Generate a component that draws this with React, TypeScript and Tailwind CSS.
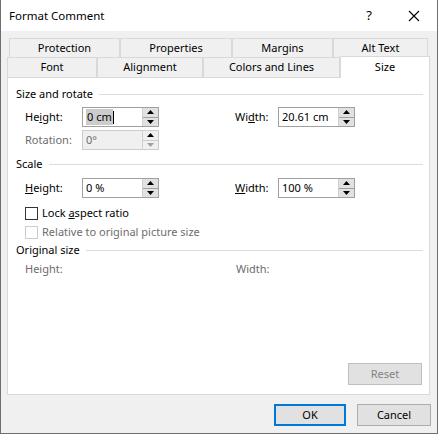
import type { ReactNode } from 'react';

const font = { fontFamily: '"Noto Sans", "Segoe UI", sans-serif' };

function Arrow({ up, dim }: { up?: boolean; dim?: boolean }) {
  return (
    <svg width="7" height="4" viewBox="0 0 7 4" className="block">
      <polygon points={up ? '3.5,0 7,4 0,4' : '0,0 7,0 3.5,4'} fill={dim ? '#a0a0a0' : '#000'} />
    </svg>
  );
}

function Spin({ value, disabled, selected }: { value: string; disabled?: boolean; selected?: boolean }) {
  return (
    <div
      className={`flex h-[20px] w-[77px] border ${disabled ? 'border-[#cccccc] bg-[#f0f0f0]' : 'border-[#a0a0a0] bg-white'}`}
    >
      <div className={`flex-1 flex items-center pl-[3px] text-[11px] ${disabled ? 'text-[#6d6d6d]' : 'text-black'}`}>
        {selected ? (
          <>
            <span className="bg-[#cccccc] px-[1px]">{value}</span>
            <span className="w-px h-[13px] bg-black" />
          </>
        ) : (
          value
        )}
      </div>
      <div className="flex flex-col w-[16px] border-l border-[#d0d0d0]">
        <div className={`flex-1 flex items-center justify-center border-b ${disabled ? 'bg-[#f0f0f0] border-[#cccccc]' : 'bg-[#e1e1e1] border-[#a0a0a0]'}`}>
          <Arrow up />
        </div>
        <div className={`flex-1 flex items-center justify-center ${disabled ? 'bg-[#f0f0f0]' : 'bg-[#e1e1e1]'}`}>
          <Arrow dim={disabled} />
        </div>
      </div>
    </div>
  );
}

function Section({ title, lineLeft }: { title: string; lineLeft: number }) {
  return (
    <div className="flex items-center h-[15px] pl-[8px] pr-[6px]">
      <span className="text-[11px] text-black whitespace-nowrap">{title}</span>
      <div className="flex-1 h-px bg-[#dcdcdc]" style={{ marginLeft: lineLeft }} />
    </div>
  );
}

function Label({ children, dim, w }: { children: ReactNode; dim?: boolean; w: string }) {
  return <span className={`${w} text-[11px] ${dim ? 'text-[#6d6d6d]' : 'text-black'}`}>{children}</span>;
}

function Tab({ label, w, selected }: { label: string; w: string; selected?: boolean }) {
  return (
    <div
      className={`${w} flex items-center justify-center text-[11px] text-black border-t border-l border-r ${
        selected
          ? 'h-[22px] bg-white border-[#d9d9d9] relative z-10 -mb-px'
          : 'h-full bg-[#f0f0f0] border-[#d9d9d9]'
      }`}
    >
      {label}
    </div>
  );
}

export default function App() {
  return (
    <div style={font} className="w-[438px] h-[434px] bg-[#f0f0f0] border-l border-r border-b border-[#6f6f6f] flex flex-col">
      <div className="h-[31px] bg-white flex items-center pl-[8px] shrink-0">
        <span className="text-[11.5px] text-black">Format Comment</span>
        <span className="ml-auto mr-[36px] text-[13px] text-black">?</span>
        <svg width="12" height="12" viewBox="0 0 12 12" className="mr-[17px]">
          <path d="M1 1L11 11M11 1L1 11" stroke="#000" strokeWidth="1.1" />
        </svg>
      </div>

      <div className="flex flex-col pt-[7px]">
        <div className="flex h-[19px] pl-[8px]">
          <Tab label="Protection" w="w-[111px]" />
          <Tab label="Properties" w="w-[112px]" />
          <Tab label="Margins" w="w-[101px]" />
          <Tab label="Alt Text" w="w-[95px]" />
        </div>
        <div className="flex items-end h-[20px] pl-[6px]">
          <Tab label="Font" w="w-[90px]" />
          <Tab label="Alignment" w="w-[106px]" />
          <Tab label="Colors and Lines" w="w-[137px]" />
          <Tab label="Size" w="w-[90px]" selected />
        </div>
      </div>

      <div className="ml-[6px] w-[423px] h-[318px] bg-white border border-[#d9d9d9] flex flex-col pt-[9px]">
        <Section title="Size and rotate" lineLeft={6} />
        <div className="flex items-center mt-[5px] pl-[17px]">
          <Label w="w-[57px]">
            He<span className="underline">i</span>ght:
          </Label>
          <Spin value="0 cm" selected />
          <div className="w-[76px]" />
          <Label w="w-[43px]">
            Wi<span className="underline">d</span>th:
          </Label>
          <Spin value="20.61 cm" />
        </div>
        <div className="flex items-center mt-[3px] pl-[17px]">
          <Label w="w-[57px]" dim>
            Rotation:
          </Label>
          <Spin value="0°" disabled />
        </div>

        <div className="mt-[7px]">
          <Section title="Scale" lineLeft={6} />
        </div>
        <div className="flex items-center mt-[6px] pl-[17px]">
          <Label w="w-[57px]">
            <span className="underline">H</span>eight:
          </Label>
          <Spin value="0 %" />
          <div className="w-[76px]" />
          <Label w="w-[43px]">
            <span className="underline">W</span>idth:
          </Label>
          <Spin value="100 %" />
        </div>
        <div className="flex items-center mt-[9px] pl-[17px] h-[13px]">
          <div className="w-[13px] h-[13px] border border-[#333333] bg-white" />
          <span className="ml-[4px] text-[11px] text-black">
            Lock <span className="underline">a</span>spect ratio
          </span>
        </div>
        <div className="flex items-center mt-[6px] pl-[17px] h-[13px]">
          <div className="w-[13px] h-[13px] border border-[#cccccc] bg-white" />
          <span className="ml-[4px] text-[11px] text-[#6d6d6d]">Relative to original picture size</span>
        </div>

        <div className="mt-[4px]">
          <Section title="Original size" lineLeft={6} />
        </div>
        <div className="flex items-center mt-[4px] pl-[17px] h-[15px]">
          <Label w="w-[211px]" dim>
            Height:
          </Label>
          <Label w="w-[50px]" dim>
            Width:
          </Label>
        </div>

        <div className="mt-auto mb-[9px] flex justify-end pr-[7px]">
          <div className="w-[74px] h-[22px] border border-[#bfbfbf] bg-[#e1e1e1] flex items-center justify-center text-[11px] text-[#838383]">
            Reset
          </div>
        </div>
      </div>

      <div className="flex justify-end mt-[9px] pr-[6px] gap-[11px]">
        <div className="w-[72px] h-[22px] border-2 border-[#0078d7] bg-[#e1e1e1] flex items-center justify-center text-[11px] text-black">
          OK
        </div>
        <div className="w-[74px] h-[22px] border border-[#adadad] bg-[#e1e1e1] flex items-center justify-center text-[11px] text-black">
          Cancel
        </div>
      </div>
    </div>
  );
}
